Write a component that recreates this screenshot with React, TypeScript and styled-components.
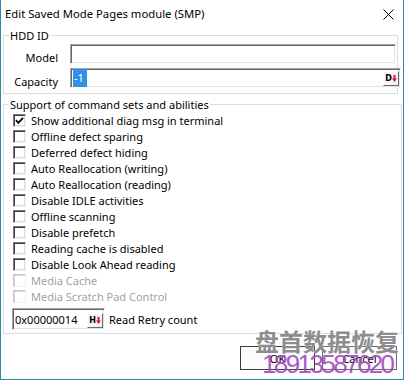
import React from "react";
import styled, { createGlobalStyle } from "styled-components";

const Global = createGlobalStyle`
  html, body { margin: 0; padding: 0; background: #ffffff; }
  body {
    font-family: "Noto Sans", "Open Sans", sans-serif;
    font-size: 11px;
    color: #000;
  }
  * { box-sizing: border-box; }
`;

const Window = styled.div`
  position: relative;
  width: 404px;
  height: 380px;
  background: #fff;
  border: 1px solid #2f8aa7;
  border-top: none;
  overflow: hidden;
`;

const TitleBar = styled.div`
  height: 28px;
  display: flex;
  align-items: flex-start;
  justify-content: space-between;
  padding: 6px 9px 0 4px;
`;

const Title = styled.span`
  font-size: 11.3px;
  line-height: 15px;
`;

const CloseIcon = styled.svg`
  margin-top: 3px;
`;

const Group = styled.fieldset<{ $w: number; $pb: number }>`
  margin: 0 0 0 2px;
  padding: 0 0 ${(p) => p.$pb}px 0;
  width: ${(p) => p.$w}px;
  min-width: 0;
  border: 1px solid #dcdcdc;
  & + & { margin-top: 3px; }
`;

const Legend = styled.legend`
  font-size: 11px;
  line-height: 15px;
  padding: 0 1px;
  margin-left: 5px;
`;

const FormGrid = styled.div`
  display: grid;
  grid-template-columns: 54px 1fr;
  column-gap: 12px;
  row-gap: 4px;
  padding-top: 1px;
`;

const FieldLabel = styled.label`
  text-align: right;
  line-height: 15px;
  height: 20px;
  padding-top: 6px;
`;

const TextBox = styled.div<{ $w: number; $h?: number }>`
  position: relative;
  width: ${(p) => p.$w}px;
  height: ${(p) => p.$h ?? 20}px;
  background: #fff;
  border: 1px solid;
  border-color: #a0a0a0 #fcfcfc #fcfcfc #a0a0a0;
  box-shadow: inset 1px 1px 0 #696969, inset -1px -1px 0 #e3e3e3;
  display: flex;
  align-items: center;
  padding-left: 2px;
  line-height: 15px;
`;

const Selected = styled.span`
  background: #3390ea;
  color: #fff;
  padding: 1px 3px 1px 1px;
  line-height: 16px;
`;

const SpinButton = styled.span`
  position: absolute;
  right: 1px;
  bottom: 1px;
  width: 16px;
  height: 15px;
  background: #f4f4f4;
  border: 1px solid;
  border-color: #fff #6a6a6a #6a6a6a #fff;
  display: flex;
  align-items: center;
  justify-content: center;
  font-family: "DejaVu Sans", sans-serif;
  font-weight: bold;
  font-size: 8px;
  line-height: 8px;
  color: #000;
`;

const List = styled.div`
  display: flex;
  flex-direction: column;
  padding-left: 9px;
`;

const Row = styled.div<{ $disabled?: boolean }>`
  height: 16px;
  display: flex;
  align-items: center;
  gap: 5px;
  line-height: 15px;
  color: ${(p) => (p.$disabled ? "#a3a3a3" : "#000")};
`;

const Box = styled.span<{ $disabled?: boolean }>`
  width: 13px;
  height: 13px;
  flex: none;
  background: #fff;
  border: 1px solid;
  border-color: ${(p) =>
    p.$disabled ? "#c8c8c8 #f0f0f0 #f0f0f0 #c8c8c8" : "#7a7a7a #f0f0f0 #f0f0f0 #7a7a7a"};
  box-shadow: ${(p) =>
    p.$disabled ? "inset 1px 1px 0 #d8d8d8" : "inset 1px 1px 0 #404040, inset -1px -1px 0 #dcdcdc"};
  display: flex;
  align-items: center;
  justify-content: center;
`;

const RetryRow = styled.div`
  display: flex;
  align-items: center;
  gap: 4px;
  margin-top: 4px;
  margin-left: -1px;
  line-height: 15px;
`;

const Buttons = styled.div`
  display: flex;
  justify-content: flex-end;
  gap: 7px;
  margin-top: 12px;
  padding-right: 6px;
`;

const Button = styled.button<{ $default?: boolean }>`
  width: 75px;
  height: 24px;
  font-family: inherit;
  font-size: 11px;
  color: #000;
  background: #fbfbfb;
  border: 1px solid ${(p) => (p.$default ? "#3a3a3a" : "#6a6a6a")};
  padding: 0;
`;

const WatermarkCn = styled.div`
  position: absolute;
  left: 254px;
  top: 327px;
  font-family: "Noto Sans CJK SC", sans-serif;
  font-weight: bold;
  font-size: 24px;
  line-height: 28px;
  color: rgba(120, 120, 120, 0.85);
  text-shadow: 0 0 1px #fff;
  pointer-events: none;
`;

const WatermarkNum = styled.div`
  position: absolute;
  left: 261px;
  top: 350px;
  font-family: "Liberation Sans", sans-serif;
  font-size: 26px;
  line-height: 28px;
  letter-spacing: -2.6px;
  color: rgba(160, 70, 190, 0.9);
  pointer-events: none;
`;

const Arrow = () => (
  <svg width="5" height="7" viewBox="0 0 5 7">
    <path d="M1.5 0h2v3.5H5L2.5 7 0 3.5h1.5z" fill="#d3212b" />
  </svg>
);

const Check = () => (
  <svg width="9" height="9" viewBox="0 0 9 9">
    <polyline points="1,4.2 3.4,6.8 8,1.8" fill="none" stroke="#000" strokeWidth="1.8" />
  </svg>
);

const items: { label: string; checked?: boolean; disabled?: boolean }[] = [
  { label: "Show additional diag msg in terminal", checked: true },
  { label: "Offline defect sparing" },
  { label: "Deferred defect hiding" },
  { label: "Auto Reallocation (writing)" },
  { label: "Auto Reallocation (reading)" },
  { label: "Disable IDLE activities" },
  { label: "Offline scanning" },
  { label: "Disable prefetch" },
  { label: "Reading cache is disabled" },
  { label: "Disable Look Ahead reading" },
  { label: "Media Cache", disabled: true },
  { label: "Media Scratch Pad Control", disabled: true },
];

export default function App() {
  return (
    <>
      <Global />
      <Window>
        <TitleBar>
          <Title>Edit Saved Mode Pages module (SMP)</Title>
          <CloseIcon width="11" height="11" viewBox="0 0 11 11">
            <path d="M0.5 0.5L10.5 10.5M10.5 0.5L0.5 10.5" stroke="#000" strokeWidth="1" />
          </CloseIcon>
        </TitleBar>

        <Group $w={395} $pb={5}>
          <Legend>HDD ID</Legend>
          <FormGrid>
            <FieldLabel>Model</FieldLabel>
            <TextBox $w={326} />
            <FieldLabel>Capacity</FieldLabel>
            <TextBox $w={331}>
              <Selected>-1</Selected>
              <SpinButton>
                D<Arrow />
              </SpinButton>
            </TextBox>
          </FormGrid>
        </Group>

        <Group $w={399} $pb={3}>
          <Legend>Support of command sets and abilities</Legend>
          <List>
            {items.map((it) => (
              <Row key={it.label} $disabled={it.disabled}>
                <Box $disabled={it.disabled}>{it.checked && <Check />}</Box>
                {it.label}
              </Row>
            ))}
            <RetryRow>
              <TextBox $w={93} $h={22}>
                0x00000014
                <SpinButton>
                  H<Arrow />
                </SpinButton>
              </TextBox>
              Read Retry count
            </RetryRow>
          </List>
        </Group>

        <Buttons>
          <Button $default>OK</Button>
          <Button>Cancel</Button>
        </Buttons>

        <WatermarkCn>盘首数据恢复</WatermarkCn>
        <WatermarkNum>18913587620</WatermarkNum>
      </Window>
    </>
  );
}
